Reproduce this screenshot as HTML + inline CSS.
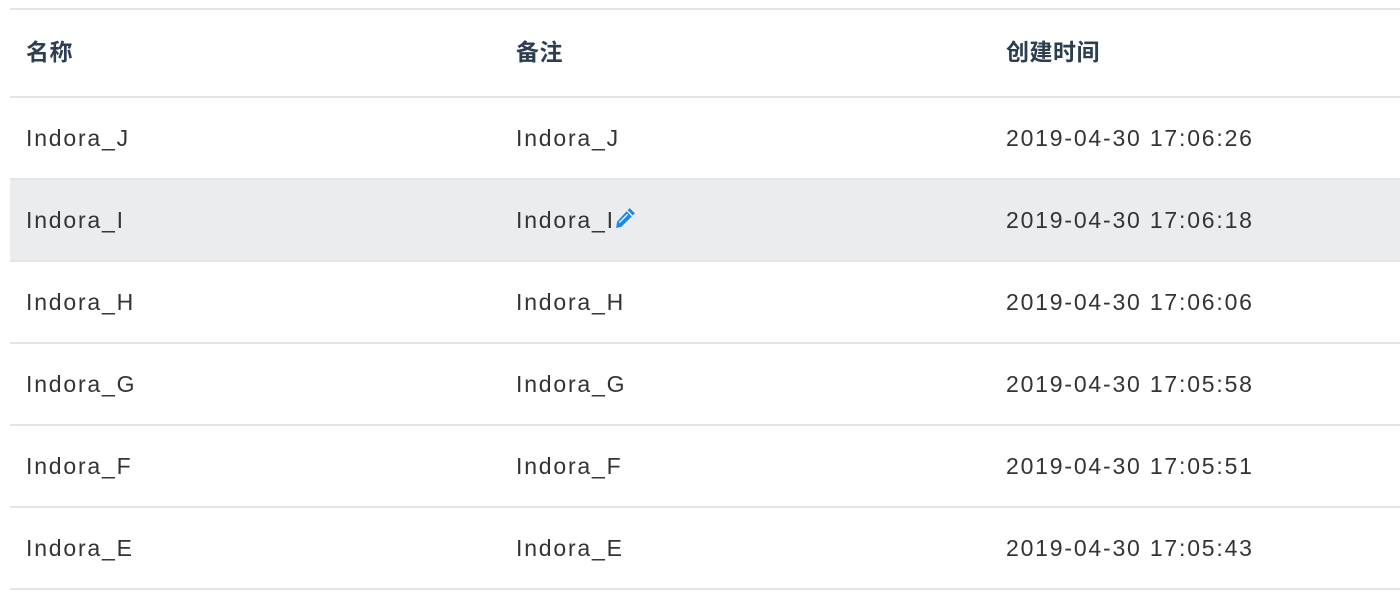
<!DOCTYPE html>
<html><head><meta charset="utf-8"><style>
html,body{margin:0;padding:0;background:#fff;width:1400px;height:600px;overflow:hidden}
.t{position:absolute;left:10px;top:8px;width:1390px}
.r{position:relative;height:80px;border-top:2px solid #e3e6e9}
.r.h{height:86px}
.r.last{border-bottom:2px solid #e3e6e9}
.r.hl{background:#ebecee}
.c{position:absolute;top:1px;bottom:0;display:flex;align-items:center;font-family:"Liberation Sans","Noto Sans CJK SC",sans-serif;font-size:23px;color:#333;letter-spacing:1.8px}
.h .c{font-weight:bold;color:#2c3e50;font-size:23px;letter-spacing:0.5px;top:-6px}
.c1{left:16px}.c2{left:506px}.c3{left:996px}
</style></head><body>
<div class="t">
<div class="r h"><div class="c c1">名称</div><div class="c c2">备注</div><div class="c c3">创建时间</div></div>
<div class="r"><div class="c c1">Indora_J</div><div class="c c2">Indora_J</div><div class="c c3">2019-04-30 17:06:26</div></div>
<div class="r hl"><div class="c c1">Indora_I</div><div class="c c2">Indora_I<svg width="23" height="23" viewBox="0 0 22 22" style="margin-left:-1px;margin-top:-6px"><g fill="#1e88e5"><path d="M15 2 L20 7 L18 9 L13 4 Z"/><path d="M12 5 L17 10 L7 20 L2 21 L3 15 Z"/></g><path d="M5 16 L13 8" stroke="#fff" stroke-width="1.2"/></svg></div><div class="c c3">2019-04-30 17:06:18</div></div>
<div class="r"><div class="c c1">Indora_H</div><div class="c c2">Indora_H</div><div class="c c3">2019-04-30 17:06:06</div></div>
<div class="r"><div class="c c1">Indora_G</div><div class="c c2">Indora_G</div><div class="c c3">2019-04-30 17:05:58</div></div>
<div class="r"><div class="c c1">Indora_F</div><div class="c c2">Indora_F</div><div class="c c3">2019-04-30 17:05:51</div></div>
<div class="r last"><div class="c c1">Indora_E</div><div class="c c2">Indora_E</div><div class="c c3">2019-04-30 17:05:43</div></div>
</div>
</body></html>
